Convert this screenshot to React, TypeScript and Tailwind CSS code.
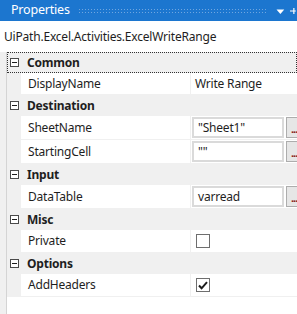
import React from 'react';

type Prop = {
  name: string;
  kind: 'text' | 'input' | 'check';
  value?: string;
  checked?: boolean;
};

type Group = { title: string; focused?: boolean; props: Prop[] };

const GROUPS: Group[] = [
  { title: 'Common', focused: true, props: [{ name: 'DisplayName', kind: 'text', value: 'Write Range' }] },
  {
    title: 'Destination',
    props: [
      { name: 'SheetName', kind: 'input', value: '"Sheet1"' },
      { name: 'StartingCell', kind: 'input', value: '""' },
    ],
  },
  { title: 'Input', props: [{ name: 'DataTable', kind: 'input', value: 'varread' }] },
  { title: 'Misc', props: [{ name: 'Private', kind: 'check', checked: false }] },
  { title: 'Options', props: [{ name: 'AddHeaders', kind: 'check', checked: true }] },
];

function Collapse() {
  return (
    <svg width="9" height="9" viewBox="0 0 9 9" className="shrink-0">
      <rect x="0.5" y="0.5" width="8" height="8" fill="#fff" stroke="#4a4a4a" />
      <path d="M2 4.5h5" stroke="#1e1e1e" />
    </svg>
  );
}

function Value({ p }: { p: Prop }) {
  if (p.kind === 'text') {
    return <span className="pl-[4px]">{p.value}</span>;
  }
  if (p.kind === 'check') {
    return (
      <div className="ml-[5px] w-[14px] h-[14px] border border-[#6e6e6e] bg-white flex items-center justify-center">
        {p.checked && (
          <svg width="10" height="9" viewBox="0 0 10 9">
            <path d="M1 4.5l2.6 2.8L9 1.2" fill="none" stroke="#1b1b1b" strokeWidth="2" />
          </svg>
        )}
      </div>
    );
  }
  return (
    <div className="flex items-stretch h-full py-px pl-px">
      <div className="w-[92px] border-2 border-[#dadada] bg-white flex items-center pl-[4px] leading-none">
        {p.value}
      </div>
      <div className="ml-[2px] flex-1 bg-[#e6e6e6] border border-[#adadad] border-r-0 flex items-end pl-[4px] pb-[3px] text-[#8a1c1c] leading-none text-[11px] font-bold tracking-[-1px]">
        ...
      </div>
    </div>
  );
}

export default function App() {
  return (
    <div className="w-[297px] h-[314px] bg-white flex flex-col overflow-hidden text-[12px] tracking-[-0.2px] text-[#1e1e1e] font-['Noto_Sans',sans-serif]">
      {/* title bar */}
      <div className="h-[21px] bg-[#1c76cf] flex items-center shrink-0">
        <span className="pl-[11px] text-white text-[12.5px] leading-none">Properties</span>
        <div className="ml-[8px] h-[5px] w-[194px] bg-[radial-gradient(circle,#6fa6e0_0.8px,transparent_0.9px)] bg-[length:3px_3px]" />
        <svg width="9" height="6" viewBox="0 0 9 6" className="ml-[10px] mt-[2px]">
          <path d="M0.5 0.5h8l-4 4.5z" fill="#ffffff" />
        </svg>
        <svg width="8" height="10" viewBox="0 0 8 10" className="ml-[4px]">
          <path d="M1 5h6M5 2v6" stroke="#fff" strokeWidth="1.2" fill="none" />
        </svg>
      </div>

      {/* selected object */}
      <div className="h-[31px] flex items-center pl-[4px] shrink-0">UiPath.Excel.Activities.ExcelWriteRange</div>

      {/* grid */}
      <div className="flex flex-1">
        <div className="w-[7px] bg-[#f0f0f0] border-r border-[#d4d4d4] shrink-0" />
        <div className="flex-1 flex flex-col">
          {GROUPS.map((g) => (
            <React.Fragment key={g.title}>
              <div
                className={
                  'h-[21px] bg-[#f0f0f0] flex items-center font-bold ' +
                  (g.focused ? 'border border-dotted border-[#333]' : '')
                }
              >
                <div className={g.focused ? 'pl-[2px]' : 'pl-[3px]'}>
                  <Collapse />
                </div>
                <span className="pl-[8px] leading-none">{g.title}</span>
              </div>
              {g.props.map((p) => (
                <div
                  key={p.name}
                  className={
                    'flex ' +
                    (p.kind === 'input' ? 'h-[24px]' : p.kind === 'check' ? 'h-[23px]' : 'h-[22px]')
                  }
                >
                  <div className="w-[14px] bg-[#f0f0f0] shrink-0" />
                  <div className="w-[169px] flex items-center pl-[7px] border-b border-[#f0f0f0] shrink-0">
                    {p.name}
                  </div>
                  <div className="w-px bg-[#f0f0f0] shrink-0" />
                  <div className="flex-1 flex items-center border-b border-[#f0f0f0]">
                    {p.kind === 'input' ? (
                      <div className="h-full w-full">
                        <Value p={p} />
                      </div>
                    ) : (
                      <Value p={p} />
                    )}
                  </div>
                </div>
              ))}
            </React.Fragment>
          ))}
        </div>
      </div>
    </div>
  );
}
